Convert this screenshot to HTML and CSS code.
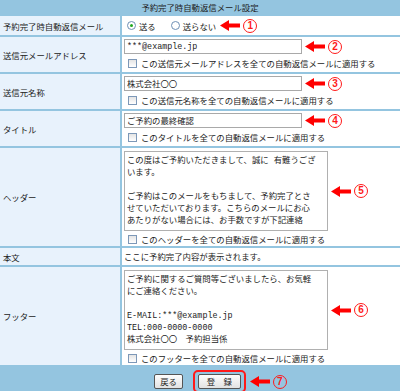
FILE: index.html
```html
<!DOCTYPE html>
<html lang="ja">
<head>
    <meta charset="UTF-8">
    <title>予約完了時自動返信メール設定</title>
    <link rel="stylesheet" href="styles.css">
</head>
<body>
    <div class="title">予約完了時自動返信メール設定</div>
    <table class="settings">
        <tr class="row-send">
            <td class="label">予約完了時自動返信メール</td>
            <td class="field">
                <div class="line">
                    <span class="radio checked"></span><span class="radio-text">送る</span>
                    <span class="radio"></span><span class="radio-text">送らない</span>
                    <span class="mark"><svg class="arrow" viewBox="0 0 20 11"><polygon points="0,5.5 9,0 9,3.5 20,3.5 20,7.5 9,7.5 9,11"/></svg><span class="num">1</span></span>
                </div>
            </td>
        </tr>
        <tr>
            <td class="label">送信元メールアドレス</td>
            <td class="field">
                <div class="line">
                    <input class="text-input" type="text" value="***@example.jp">
                    <span class="mark"><svg class="arrow" viewBox="0 0 20 11"><polygon points="0,5.5 9,0 9,3.5 20,3.5 20,7.5 9,7.5 9,11"/></svg><span class="num">2</span></span>
                </div>
                <div class="check"><span class="box"></span>この送信元メールアドレスを全ての自動返信メールに適用する</div>
            </td>
        </tr>
        <tr>
            <td class="label">送信元名称</td>
            <td class="field">
                <div class="line">
                    <input class="text-input" type="text" value="株式会社〇〇">
                    <span class="mark"><svg class="arrow" viewBox="0 0 20 11"><polygon points="0,5.5 9,0 9,3.5 20,3.5 20,7.5 9,7.5 9,11"/></svg><span class="num">3</span></span>
                </div>
                <div class="check"><span class="box"></span>この送信元名称を全ての自動返信メールに適用する</div>
            </td>
        </tr>
        <tr>
            <td class="label">タイトル</td>
            <td class="field">
                <div class="line">
                    <input class="text-input" type="text" value="ご予約の最終確認">
                    <span class="mark"><svg class="arrow" viewBox="0 0 20 11"><polygon points="0,5.5 9,0 9,3.5 20,3.5 20,7.5 9,7.5 9,11"/></svg><span class="num">4</span></span>
                </div>
                <div class="check"><span class="box"></span>このタイトルを全ての自動返信メールに適用する</div>
            </td>
        </tr>
        <tr>
            <td class="label">ヘッダー</td>
            <td class="field field-area">
                <div class="line">
                    <textarea class="text-area" wrap="off">この度はご予約いただきまして、誠に 有難うござ
います。

ご予約はこのメールをもちまして、予約完了とさ
せていただいております。こちらのメールにお心
あたりがない場合には、お手数ですが下記連絡</textarea>
                    <span class="mark"><svg class="arrow" viewBox="0 0 20 11"><polygon points="0,5.5 9,0 9,3.5 20,3.5 20,7.5 9,7.5 9,11"/></svg><span class="num">5</span></span>
                </div>
                <div class="check"><span class="box"></span>このヘッダーを全ての自動返信メールに適用する</div>
            </td>
        </tr>
        <tr>
            <td class="label">本文</td>
            <td class="field field-text">ここに予約完了内容が表示されます。</td>
        </tr>
        <tr>
            <td class="label">フッター</td>
            <td class="field field-area">
                <div class="line">
                    <textarea class="text-area" wrap="off">ご予約に関するご質問等ございましたら、お気軽
にご連絡ください。

E-MAIL:***@example.jp
TEL:000-0000-0000
株式会社〇〇　予約担当係</textarea>
                    <span class="mark"><svg class="arrow" viewBox="0 0 20 11"><polygon points="0,5.5 9,0 9,3.5 20,3.5 20,7.5 9,7.5 9,11"/></svg><span class="num">6</span></span>
                </div>
                <div class="check"><span class="box"></span>このフッターを全ての自動返信メールに適用する</div>
            </td>
        </tr>
    </table>
    <div class="actions">
        <button class="btn" type="button">戻る</button>
        <span class="btn-highlight">
            <button class="btn btn-save" type="button">登　録</button>
            <span class="mark mark-save"><svg class="arrow" viewBox="0 0 20 11"><polygon points="0,5.5 9,0 9,3.5 20,3.5 20,7.5 9,7.5 9,11"/></svg><span class="num">7</span></span>
        </span>
    </div>
</body>
</html>
```

FILE: styles.css
```css
body {
    margin: 0;
    background-color: #94c5e0;
    font-family: "Noto Sans CJK JP", sans-serif;
    font-size: 8.4px;
    color: #222;
}

.title {
    height: 16px;
    line-height: 15px;
    text-align: center;
}

.settings {
    width: 100%;
    border-collapse: collapse;
}

.settings td {
    padding: 0;
    border-bottom: 2px solid #94c5e0;
}

.settings .label {
    width: 117px;
    padding-left: 3px;
    background-color: #e8f2fc;
    border-right: 2px solid #94c5e0;
    vertical-align: middle;
}

.settings .field {
    background-color: #fff;
    padding: 2px 3px 3px 2px;
    vertical-align: top;
}

.row-send td {
    height: 19px;
}

.row-send .field {
    padding: 0 0 0 5px;
    vertical-align: middle;
}

.field-area {
    padding-top: 3px !important;
    padding-bottom: 1px !important;
}

.field-text {
    height: 12px;
    line-height: 12px;
}

.line {
    display: flex;
    align-items: center;
}

.radio {
    width: 7px;
    height: 7px;
    border: 1px solid #6e8fb5;
    border-radius: 50%;
    background: #fff;
    position: relative;
    margin-right: 3px;
}

.radio.checked::after {
    content: "";
    position: absolute;
    left: 2px;
    top: 2px;
    width: 3px;
    height: 3px;
    border-radius: 50%;
    background: #22a822;
}

.radio-text {
    margin-right: 15px;
}

.radio-text + .mark {
    margin-left: -11px;
}

.text-input {
    width: 178px;
    height: 15px;
    box-sizing: border-box;
    margin: 0;
    padding: 0 2px;
    border: 1px solid #a9a9a9;
    font-family: "Liberation Mono", "Noto Sans CJK JP", monospace;
    font-size: 8.4px;
    color: #222;
}

.text-area {
    width: 204px;
    height: 80px;
    box-sizing: border-box;
    margin: 0;
    padding: 3px 2px;
    border: 1px solid #b0b0b0;
    font-family: "Liberation Mono", "Noto Sans CJK JP", monospace;
    font-size: 8.4px;
    line-height: 12px;
    color: #222;
    resize: none;
    overflow: hidden;
}

.check {
    display: flex;
    align-items: center;
    height: 12px;
    margin-top: 3px;
    padding-left: 4px;
}

.field-area .check {
    margin-top: 2px;
}

.box {
    width: 7px;
    height: 7px;
    border: 1px solid #7d98b8;
    background: linear-gradient(#e4e4e4, #fff);
    margin-right: 4px;
}

.mark {
    display: flex;
    align-items: center;
    margin-left: 3px;
}

.arrow {
    width: 20px;
    height: 11px;
    fill: #ff0000;
}

.num {
    width: 12px;
    height: 12px;
    margin-left: 3px;
    border: 1.5px solid #ff1a1a;
    border-radius: 50%;
    color: #ff1a1a;
    font-family: "Liberation Sans", sans-serif;
    font-weight: bold;
    font-size: 10px;
    line-height: 12px;
    text-align: center;
}

.actions {
    display: flex;
    justify-content: center;
    align-items: center;
    gap: 10px;
    height: 28px;
}

.btn {
    height: 15px;
    padding: 0 5px;
    border: 1px solid #555;
    border-radius: 2px;
    background: linear-gradient(#fdfdfd, #e2e2e2);
    font-family: "Noto Sans CJK JP", sans-serif;
    font-size: 8.4px;
    line-height: 13px;
    color: #222;
}

.btn-highlight {
    position: relative;
    padding: 2px 3px;
    border: 2px solid #ff1a1a;
    border-radius: 5px;
    display: flex;
}

.btn-save {
    width: 43px;
    padding: 0;
}

.mark-save {
    position: absolute;
    left: calc(100% + 3px);
    top: 3px;
}
```
